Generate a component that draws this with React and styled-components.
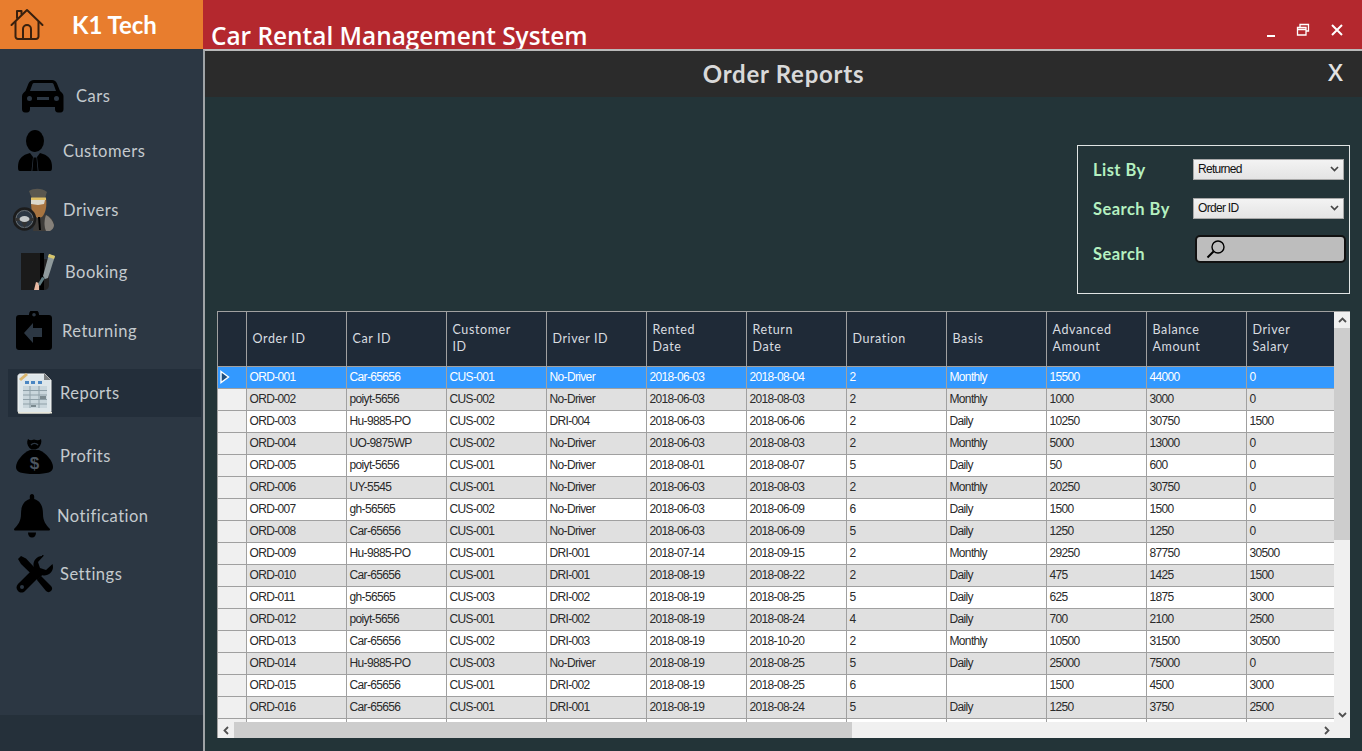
import React from 'react'
import styled, { createGlobalStyle } from 'styled-components'

const GlobalStyle = createGlobalStyle`
  html, body {
    margin: 0;
    height: 100%;
    overflow: hidden;
    background: #233438;
  }
  * {
    box-sizing: border-box;
  }
`

const Page = styled.div`
  display: grid;
  grid-template-columns: 203px 1fr;
  grid-template-rows: 49px 1fr;
  width: 1362px;
  height: 751px;
  font-family: 'Lato', 'Liberation Sans', sans-serif;
`

const Brand = styled.div`
  display: flex;
  align-items: center;
  padding-left: 10px;
  gap: 28px;
  background: #e87d2e;
`
const BrandName = styled.div`
  color: #fff;
  font-size: 24px;
  font-weight: 700;
`
const TopBar = styled.div`
  display: flex;
  justify-content: space-between;
  align-items: flex-end;
  padding-left: 8px;
  background: #b4282e;
`
const AppTitle = styled.div`
  color: #fff;
  font-family: 'Open Sans', sans-serif;
  font-size: 24.4px;
  font-weight: 600;
  line-height: 28px;
  margin-bottom: -1px;
`
const WindowButtons = styled.div`
  display: flex;
  gap: 20px;
  padding: 0 18px 12px 0;
  height: 100%;
  align-self: flex-end;
  align-items: flex-end;
`

const Sidebar = styled.nav`
  display: flex;
  flex-direction: column;
  background: linear-gradient(#2c3743 0, #2c3743 666px, #25303a 666px);
  padding: 19px 2px 0 0;
`
const NavItem = styled.div`
  display: flex;
  align-items: center;
  flex: none;
  height: ${p => p.$h}px;
  margin-top: ${p => p.$mt || 0}px;
  margin-left: ${p => (p.$active ? 8 : 0)}px;
  padding-left: ${p => (p.$active ? p.$x - 8 : p.$x)}px;
  gap: ${p => p.$gap}px;
  background: ${p => (p.$active ? '#232e3a' : 'transparent')};
`
const NavLabel = styled.span`
  color: #c4cace;
  font-size: 16.5px;
  letter-spacing: 0.5px;
`

const Main = styled.main`
  display: flex;
  flex-direction: column;
  min-width: 0;
  background: #233438;
  border-top: 2px solid #b9b9b9;
  border-left: 2px solid #9fa3a6;
`
const TitleBand = styled.header`
  display: grid;
  grid-template-columns: 1fr auto 1fr;
  align-items: center;
  height: 46px;
  flex: none;
  background: #2b2b2b;
`
const PageTitle = styled.h1`
  grid-column: 2;
  margin: 0 0 1px;
  color: #d9d9d9;
  font-size: 24px;
  font-weight: 700;
  letter-spacing: 0.75px;
`
const CloseX = styled.div`
  justify-self: end;
  padding-right: 19px;
  color: #e2e2e2;
  font-family: 'Open Sans', sans-serif;
  font-size: 24px;
  font-weight: 600;
  margin-top: -6px;
`

const Content = styled.div`
  display: flex;
  flex-direction: column;
  flex: 1;
  min-height: 0;
  padding: 48px 12px 13px 12px;
`
const FilterBox = styled.section`
  display: flex;
  flex-direction: column;
  align-self: flex-end;
  width: 273px;
  height: 149px;
  padding: 11px 5px 0 15px;
  border: 1px solid #e0e4e4;
`
const FilterRow = styled.div`
  display: flex;
  align-items: center;
  justify-content: space-between;
  height: ${p => p.$h}px;
  margin-bottom: ${p => p.$mb}px;
`
const FilterLabel = styled.label`
  margin-top: 2px;
  color: #b5f0c0;
  font-size: 16.5px;
  font-weight: 700;
  letter-spacing: 0.45px;
`
const SelectBox = styled.div`
  display: flex;
  align-items: center;
  justify-content: space-between;
  width: 151px;
  height: 21px;
  padding: 0 4px;
  border: 1px solid #a8a8a8;
  background: linear-gradient(#f3f3f3, #e4e4e4);
  color: #111;
  font-family: 'Liberation Sans', sans-serif;
  font-size: 12px;
  letter-spacing: -0.7px;
`
const SearchBox = styled.div`
  display: flex;
  align-items: center;
  width: 151px;
  height: 28px;
  margin: 0 -2px 9px 0;
  padding-left: 9px;
  border: 2px solid #111;
  border-radius: 5px;
  background: #bdbdbd;
`

const TableFrame = styled.div`
  display: grid;
  grid-template-columns: 1fr 16px;
  grid-template-rows: 1fr 16px;
  height: 427px;
  margin-top: 17px;
  background: #f0f0f0;
  border-top: 1px solid #a0a0a0;
  border-left: 1px solid #a0a0a0;
  flex: none;
`
const TableClip = styled.div`
  overflow: hidden;
  background: #fff;
`
const Grid = styled.table`
  width: 1116px;
  border-collapse: collapse;
  table-layout: fixed;
  font-family: 'Liberation Sans', sans-serif;
`
const HeadCell = styled.th`
  height: 54px;
  padding: 0 0 1px 6px;
  background: #1f2a37;
  border-right: 1px solid #a0a0a0;
  border-bottom: 1px solid #a0a0a0;
  color: #d9dde0;
  font-family: 'Lato', sans-serif;
  font-size: 12.5px;
  font-weight: 400;
  line-height: 17px;
  letter-spacing: 0.6px;
  text-align: left;
  white-space: pre-line;
`
const Cell = styled.td`
  height: 22px;
  padding: 0 0 0 3px;
  background: ${p => (p.$selected ? '#3399ff' : p.$odd ? '#e0e0e0' : '#fff')};
  border-right: 1px solid #a0a0a0;
  border-bottom: 1px solid #a0a0a0;
  color: ${p => (p.$selected ? '#fff' : '#2a2a2a')};
  font-size: 12px;
  letter-spacing: -0.65px;
  white-space: nowrap;
  overflow: hidden;
`
const RowHead = styled.td`
  height: 22px;
  padding: 0 0 0 1px;
  background: ${p => (p.$selected ? '#3399ff' : '#f0f0f0')};
  border-right: 1px solid #a0a0a0;
  border-bottom: 1px solid #a0a0a0;
`
const Arrow = styled.svg`
  display: block;
  width: 12px;
  height: 14px;
`

const VScroll = styled.div`
  display: flex;
  flex-direction: column;
  align-items: stretch;
  background: #f0f0f0;
`
const HScroll = styled.div`
  display: flex;
  align-items: stretch;
  background: #f0f0f0;
`
const ScrollBtn = styled.div`
  display: flex;
  align-items: center;
  justify-content: center;
  flex: none;
  width: 16px;
  height: 16px;
  color: #505050;
`
const Thumb = styled.div`
  flex: none;
  background: #cdcdcd;
  width: ${p => (p.$w ? `${p.$w}px` : '100%')};
  height: ${p => (p.$h ? `${p.$h}px` : '100%')};
`
const Spacer = styled.div`
  flex: 1;
`

const Chevron = ({ dir }) => {
  const pts = { up: '1,6 4.5,2.5 8,6', down: '1,3 4.5,6.5 8,3', left: '6,1 2.5,4.5 6,8', right: '3,1 6.5,4.5 3,8' }
  return (
    <svg width="9" height="9" viewBox="0 0 9 9">
      <polyline points={pts[dir]} fill="none" stroke="currentColor" strokeWidth="1.8" />
    </svg>
  )
}

const HomeIcon = () => (
  <svg width="34" height="34" viewBox="0 0 34 34" fill="none" stroke="#38200e" strokeWidth="2" strokeLinejoin="round" strokeLinecap="round">
    <path d="M1.5 17 17 2l15.5 15" />
    <path d="M5.5 14v14.5a2.5 2.5 0 0 0 2.5 2.5h18a2.5 2.5 0 0 0 2.5-2.5V14" />
    <path d="M7 10V3h4.5v3" />
    <path d="M13 31V21a4 4 0 0 1 8 0v10" />
  </svg>
)

const CarIcon = () => (
  <svg width="42" height="34" viewBox="0 0 42 34">
    <path
      fillRule="evenodd"
      d="M12 1h18c2.5 0 4 1.2 5 3.5l3 7.5c2 1.5 3.500 3 3.500 5.500V30c0 2-1 3.500-3 3.500h-2.500c-2 0-3-1.500-3-3.500v-2H8v2c0 2-1 3.500-3 3.500H3c-2 0-3-1.500-3-3.500V17.500C0 15 1.500 13.500 3.500 12l3-7.500C7.500 2.200 9.500 1 12 1zM10.500 5 8 12h26l-2.500-7c-.3-.6-.8-1-1.500-1H12c-.7 0-1.200.4-1.500 1zM7.500 17a2.500 2.500 0 1 0 0 5 2.500 2.500 0 0 0 0-5zm27 0a2.500 2.500 0 1 0 0 5 2.500 2.500 0 0 0 0-5zM15 18v3h12v-3z"
      fill="#000"
    />
  </svg>
)

const CustomerIcon = () => (
  <svg width="34" height="42" viewBox="0 0 34 42">
    <ellipse cx="17" cy="11" rx="9" ry="11" fill="#000" />
    <path d="M0 37c0-7 3-11 9-13l3-1 3 4-1.500 14H2c-1.500 0-2-1-2-4zM34 37c0-7-3-11-9-13l-3-1-3 4 1.500 14H32c1.500 0 2-1 2-4z" fill="#000" />
    <path d="M15.500 27.500h3l1.200 13.500h-5.400z" fill="#000" />
  </svg>
)

const DriverIcon = () => (
  <svg width="42" height="44" viewBox="0 0 42 44">
    <path d="M22 27c4-2 8-2 12 0 5 2 7 7 7 10 0 4-3 6-7 6H20z" fill="#3d3b39" />
    <path d="M33 27c4 2 7 6 8 10 0 3-2 5-4 6h-4c-2-4-2-11 0-16z" fill="#85807a" />
    <path d="M18 10h15c1 7 0 15-4 19l-4 1c-3-1-5-3-6-6-1-5-1-9-1-14z" fill="#a87440" />
    <path d="M18 12h14l-1 4-6 1-7-1z" fill="#dcd8cc" />
    <path d="M16 3c5-3 13-3 18 1-1 2-1 4-2 6H19c-1-2-2-4-3-7z" fill="#5a574f" />
    <path d="M18 9.500h15v2.500H18z" fill="#e0c065" />
    <path d="M26 29l1 13" stroke="#000" strokeWidth="2" />
    <circle cx="11.500" cy="31" r="10.500" fill="none" stroke="#1c1c1c" strokeWidth="2.500" />
    <circle cx="11.500" cy="31" r="8.500" fill="none" stroke="#666b6e" strokeWidth="1" />
    <path d="M2 30h19v3h-6l-3.500 7-3.500-7H2z" fill="#333" />
    <ellipse cx="11.500" cy="31" rx="5" ry="3" fill="#c4c8c9" />
  </svg>
)

const BookingIcon = () => (
  <svg width="36" height="38" viewBox="0 0 36 38">
    <path d="M1 0h23v37H1z" fill="#1a1a1a" />
    <path d="M20 0h4v37h-4z" fill="#000" />
    <path d="M24 6h5v26c0 3-2 5-5 5z" fill="#222" />
    <path d="M29 1l6 2-7 22-3 1-2-3z" fill="#8f9a9c" />
    <path d="M29 1l6 2-1 3-6-2z" fill="#d8c66a" />
    <path d="M16 29l3 1v7h-5z" fill="#e8b9a2" />
    <path d="M22 24l3 1-5 8-2-2z" fill="#5f7b80" />
  </svg>
)

const ReturnIcon = () => (
  <svg width="36" height="40" viewBox="0 0 36 40">
    <path
      fillRule="evenodd"
      d="M13 4V3.500a5 5 0 0 1 10 0V4h10c1.700 0 3 1.300 3 3v29c0 1.700-1.300 3-3 3H3c-1.700 0-3-1.300-3-3V7c0-1.700 1.300-3 3-3zM18 2a1.800 1.800 0 1 0 0 3.600A1.800 1.800 0 0 0 18 2z"
      fill="#000"
    />
    <path d="M8 22l9-10v5h9v9h-9v6z" fill="#2c3743" />
  </svg>
)

const ReportIcon = () => (
  <svg width="36" height="42" viewBox="0 0 36 42">
    <path d="M3 2h25l6 6v31c0 1-1 2-2 2H3c-1 0-2-1-2-2V4c0-1 1-2 2-2z" fill="#dde6ea" stroke="#f4f4f2" />
    <path d="M27 1l7 7-7 0z" fill="#7b7f80" />
    <path d="M2 7l7-6 2 2-7 6z" fill="#d9b56d" />
    <path d="M8 9h4v3H8zM14 9h4v3h-4zM21 9h4v3h-4z" fill="#4a86c2" />
    <path d="M6 14h24v22H6z" fill="#c9d6dc" />
    <path d="M6 18.500h24M6 23h24M6 27.500h24M6 32h24M13 14v22M22 14v22" stroke="#8fa0a8" strokeWidth="1" />
    <path d="M23 24h6v3h-6zM14 33h5v2h-5z" fill="#7b8a90" />
    <path d="M1 40h34v1.500H1z" fill="#e8e6d8" />
  </svg>
)

const BagIcon = styled.svg`
  text {
    font-family: 'Liberation Sans', sans-serif;
    font-size: 17px;
    font-weight: 700;
    fill: #4c5660;
  }
`

const ProfitIcon = () => (
  <BagIcon width="37" height="36" viewBox="0 0 37 36">
    <path d="M12 1c2 1.500 3 1.500 6 .5 3 1 5 1 7-.5 1 3 0 6-2.500 9l-3 1.500h-4l-2-1.500C11 7 10.500 4 12 1z" fill="#000" />
    <path d="M14 12h9c7 3 14 11 14 17 0 5-5 7-18.500 7S0 34 0 29c0-6 7-14 14-17z" fill="#000" />
    <path d="M15 7c2-2 5-2 7 0" fill="none" stroke="#2c3743" strokeWidth="1.500" />
    <text x="18.500" y="31" textAnchor="middle">$</text>
  </BagIcon>
)

const BellIcon = () => (
  <svg width="36" height="44" viewBox="0 0 36 44">
    <path d="M18 0c1.300 0 2.200 1 2.200 2.500V5C27 7 29 13 29 20c0 7 3 11 7 15 0 1-.5 1.500-1.500 1.500h-33C.5 36.500 0 36 0 35c4-4 7-8 7-15 0-7 2-13 8.800-15V2.500C15.800 1 16.700 0 18 0z" fill="#000" />
    <path d="M14 38.500h8c0 3-1.500 5-4 5s-4-2-4-5z" fill="#000" />
  </svg>
)

const ToolsIcon = () => (
  <svg width="37" height="38" viewBox="0 0 37 38">
    <path d="M2 4l3-3 5 2.500 16 17-4.500 4.500L5 9z" fill="#000" />
    <path d="M26 1c-5 0-9 4.500-8.500 9.500.1 1 .3 1.800.6 2.500L2 29c-2 2-2 5 0 7s5 2 7 0l16-16c.8.300 1.700.500 2.500.500 5 .5 9.500-3.500 9.500-8.500 0-1-.2-2-.5-3L30 15l-6-2-2-6 6-6.500c-.7-.3-1.300-.5-2-.5z" fill="#000" />
    <circle cx="6" cy="32" r="2" fill="#2c3743" />
    <path d="M21 25l4-4 10 10c1.500 1.500 1.500 3.500 0 5s-3.500 1.500-5 0z" fill="#000" />
  </svg>
)

const SearchGlyph = () => (
  <svg width="20" height="20" viewBox="0 0 20 20" fill="none" stroke="#000">
    <circle cx="12" cy="8" r="6" strokeWidth="1.400" />
    <path d="M7.500 12.500 1.500 18.500" strokeWidth="2" />
  </svg>
)

const SelectCaret = () => (
  <svg width="9" height="6" viewBox="0 0 9 6">
    <polyline points="1,1 4.500,4.500 8,1" fill="none" stroke="#444" strokeWidth="1.700" />
  </svg>
)

const navItems = [
  { label: 'Cars', icon: CarIcon, h: 56, x: 22, gap: 12 },
  { label: 'Customers', icon: CustomerIcon, h: 54, x: 18, gap: 11 },
  { label: 'Drivers', icon: DriverIcon, h: 64, x: 13, gap: 8 },
  { label: 'Booking', icon: BookingIcon, h: 60, x: 20, gap: 9 },
  { label: 'Returning', icon: ReturnIcon, h: 58, x: 16, gap: 10 },
  { label: 'Reports', icon: ReportIcon, h: 48, x: 17, gap: 7, mt: 9, active: true },
  { label: 'Profits', icon: ProfitIcon, h: 78, x: 16, gap: 7 },
  { label: 'Notification', icon: BellIcon, h: 42, x: 14, gap: 7 },
  { label: 'Settings', icon: ToolsIcon, h: 74, x: 16, gap: 7 },
]

const columns = [
  'Order ID', 'Car ID', 'Customer\nID', 'Driver ID', 'Rented\nDate', 'Return\nDate',
  'Duration', 'Basis', 'Advanced\nAmount', 'Balance\nAmount', 'Driver\nSalary',
]

const orders = [
  ['ORD-001', 'Car-65656', 'CUS-001', 'No-Driver', '2018-06-03', '2018-08-04', '2', 'Monthly', '15500', '44000', '0'],
  ['ORD-002', 'poiyt-5656', 'CUS-002', 'No-Driver', '2018-06-03', '2018-08-03', '2', 'Monthly', '1000', '3000', '0'],
  ['ORD-003', 'Hu-9885-PO', 'CUS-002', 'DRI-004', '2018-06-03', '2018-06-06', '2', 'Daily', '10250', '30750', '1500'],
  ['ORD-004', 'UO-9875WP', 'CUS-002', 'No-Driver', '2018-06-03', '2018-08-03', '2', 'Monthly', '5000', '13000', '0'],
  ['ORD-005', 'poiyt-5656', 'CUS-001', 'No-Driver', '2018-08-01', '2018-08-07', '5', 'Daily', '50', '600', '0'],
  ['ORD-006', 'UY-5545', 'CUS-001', 'No-Driver', '2018-06-03', '2018-08-03', '2', 'Monthly', '20250', '30750', '0'],
  ['ORD-007', 'gh-56565', 'CUS-002', 'No-Driver', '2018-06-03', '2018-06-09', '6', 'Daily', '1500', '1500', '0'],
  ['ORD-008', 'Car-65656', 'CUS-001', 'No-Driver', '2018-06-03', '2018-06-09', '5', 'Daily', '1250', '1250', '0'],
  ['ORD-009', 'Hu-9885-PO', 'CUS-001', 'DRI-001', '2018-07-14', '2018-09-15', '2', 'Monthly', '29250', '87750', '30500'],
  ['ORD-010', 'Car-65656', 'CUS-001', 'DRI-001', '2018-08-19', '2018-08-22', '2', 'Daily', '475', '1425', '1500'],
  ['ORD-011', 'gh-56565', 'CUS-003', 'DRI-002', '2018-08-19', '2018-08-25', '5', 'Daily', '625', '1875', '3000'],
  ['ORD-012', 'poiyt-5656', 'CUS-001', 'DRI-002', '2018-08-19', '2018-08-24', '4', 'Daily', '700', '2100', '2500'],
  ['ORD-013', 'Car-65656', 'CUS-002', 'DRI-003', '2018-08-19', '2018-10-20', '2', 'Monthly', '10500', '31500', '30500'],
  ['ORD-014', 'Hu-9885-PO', 'CUS-003', 'No-Driver', '2018-08-19', '2018-08-25', '5', 'Daily', '25000', '75000', '0'],
  ['ORD-015', 'Car-65656', 'CUS-001', 'DRI-002', '2018-08-19', '2018-08-25', '6', '', '1500', '4500', '3000'],
  ['ORD-016', 'Car-65656', 'CUS-001', 'DRI-001', '2018-08-19', '2018-08-24', '5', 'Daily', '1250', '3750', '2500'],
  ['', '', '', '', '', '', '', '', '', '', ''],
]

const colWidths = [28, 100, 100, 100, 100, 100, 100, 100, 100, 100, 100, 88]

const App = () => {
  return (
    <>
      <GlobalStyle />
      <Page>
        <Brand>
          <HomeIcon />
          <BrandName>K1 Tech</BrandName>
        </Brand>
        <TopBar>
          <AppTitle>Car Rental Management System</AppTitle>
          <WindowButtons>
            <svg width="10" height="10" viewBox="0 0 10 10">
              <path d="M1 8h8v2H1z" fill="#fff" />
            </svg>
            <svg width="14" height="14" viewBox="0 0 14 14" fill="none" stroke="#fff" strokeWidth="1.300">
              <path d="M4 4V1.500h8.500V8H10" />
              <path d="M1.500 4.500H10v7.500H1.500zM1.500 6.500H10" />
            </svg>
            <svg width="14" height="14" viewBox="0 0 14 14" fill="none" stroke="#fff" strokeWidth="2">
              <path d="M2 2l10 10M12 2 2 12" />
            </svg>
          </WindowButtons>
        </TopBar>
        <Sidebar>
          {navItems.map(({ label, icon: Icon, h, x, gap, mt, active }) => (
            <NavItem key={label} $h={h} $x={x} $gap={gap} $mt={mt} $active={active}>
              <Icon />
              <NavLabel>{label}</NavLabel>
            </NavItem>
          ))}
        </Sidebar>
        <Main>
          <TitleBand>
            <PageTitle>Order Reports</PageTitle>
            <CloseX>X</CloseX>
          </TitleBand>
          <Content>
            <FilterBox>
              <FilterRow $h={24} $mb={15}>
                <FilterLabel>List By</FilterLabel>
                <SelectBox>
                  Returned
                  <SelectCaret />
                </SelectBox>
              </FilterRow>
              <FilterRow $h={24} $mb={18}>
                <FilterLabel>Search By</FilterLabel>
                <SelectBox>
                  Order ID
                  <SelectCaret />
                </SelectBox>
              </FilterRow>
              <FilterRow $h={30} $mb={0}>
                <FilterLabel>Search</FilterLabel>
                <SearchBox>
                  <SearchGlyph />
                </SearchBox>
              </FilterRow>
            </FilterBox>
            <TableFrame>
              <TableClip>
                <Grid>
                  <colgroup>
                    {colWidths.map((w, i) => (
                      <col key={i} width={w} />
                    ))}
                  </colgroup>
                  <thead>
                    <tr>
                      <HeadCell />
                      {columns.map(c => (
                        <HeadCell key={c}>{c}</HeadCell>
                      ))}
                    </tr>
                  </thead>
                  <tbody>
                    {orders.map((row, r) => (
                      <tr key={r}>
                        <RowHead $selected={r === 0}>
                          {r === 0 && (
                            <Arrow viewBox="0 0 12 14">
                              <path d="M2 1.500 9.500 7 2 12.500z" fill="#1f4f80" stroke="#fff" strokeWidth="1.400" />
                            </Arrow>
                          )}
                        </RowHead>
                        {row.map((v, c) => (
                          <Cell key={c} $selected={r === 0} $odd={r % 2 === 1}>
                            {v}
                          </Cell>
                        ))}
                      </tr>
                    ))}
                  </tbody>
                </Grid>
              </TableClip>
              <VScroll>
                <ScrollBtn>
                  <Chevron dir="up" />
                </ScrollBtn>
                <Thumb $h={212} />
                <Spacer />
                <ScrollBtn>
                  <Chevron dir="down" />
                </ScrollBtn>
              </VScroll>
              <HScroll>
                <ScrollBtn>
                  <Chevron dir="left" />
                </ScrollBtn>
                <Thumb $w={618} />
                <Spacer />
                <ScrollBtn>
                  <Chevron dir="right" />
                </ScrollBtn>
              </HScroll>
            </TableFrame>
          </Content>
        </Main>
      </Page>
    </>
  )
}

export default App
